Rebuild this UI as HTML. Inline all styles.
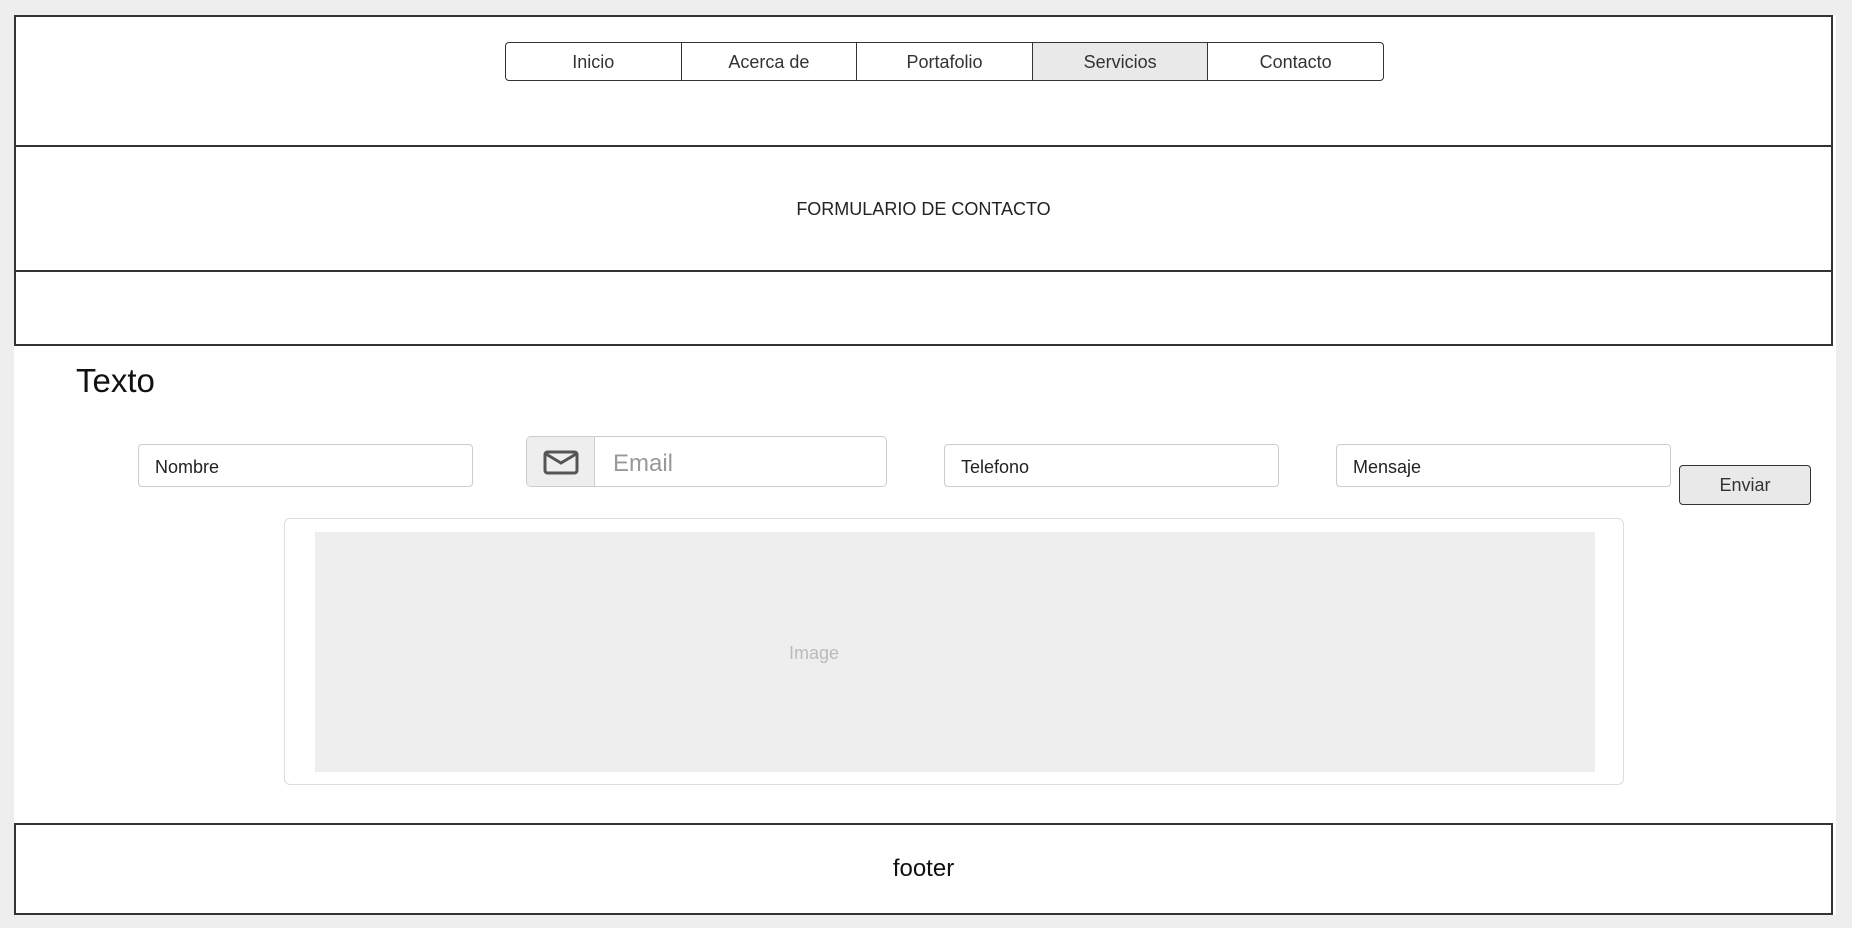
<!DOCTYPE html>
<html><head><meta charset="utf-8"><style>
*{box-sizing:border-box;margin:0;padding:0}
body{width:1852px;height:928px;background:#eee;position:relative;overflow:hidden;font-family:"Liberation Sans",Arial,sans-serif;color:#222}
.a{position:absolute}
.white{left:14px;top:15px;width:1822px;height:900px;background:#fff}
.box{border:2px solid #333;background:#fff}
.nav{left:505px;top:42px;width:879px;height:39px;border:1.5px solid #333;border-radius:4px;display:flex;overflow:hidden;background:#fff}
.nav div{flex:1;text-align:center;line-height:38px;font-size:18px;color:#333;border-left:1.5px solid #333}
.nav div:first-child{border-left:none}
.inp{border:1.5px solid #ccc;border-radius:4px;background:#fff;font-size:18px;color:#222;padding-left:16px;line-height:44px}
</style></head><body>
<div class="a white"></div>
<div class="a box" style="left:14px;top:15px;width:1819px;height:132px"></div>
<div class="a nav"><div>Inicio</div><div>Acerca de</div><div>Portafolio</div><div style="background:#e9e9e9">Servicios</div><div>Contacto</div></div>
<div class="a box" style="left:14px;top:145px;width:1819px;height:127px"></div>
<div class="a" style="left:14px;top:199px;width:1819px;text-align:center;font-size:18px;color:#222">FORMULARIO DE CONTACTO</div>
<div class="a box" style="left:14px;top:270px;width:1819px;height:76px"></div>
<div class="a" style="left:76px;top:362px;font-size:33px;color:#111">Texto</div>
<div class="a inp" style="left:138px;top:444px;width:335px;height:43px">Nombre</div>
<div class="a" style="left:526px;top:436px;width:361px;height:51px;border:1.5px solid #ccc;border-radius:5px;background:#fff;overflow:hidden">
 <div class="a" style="left:0;top:0;width:68px;height:100%;background:#eee;border-right:1.5px solid #ccc">
  <svg class="a" style="left:16px;top:13px" width="36" height="25" viewBox="0 0 36 25"><rect x="2" y="2" width="32" height="21" rx="2.5" fill="none" stroke="#555" stroke-width="3"/><path d="M3 4 L18 13 L33 4" fill="none" stroke="#555" stroke-width="3"/></svg>
 </div>
 <div class="a" style="left:86px;top:13px;font-size:24px;color:#999">Email</div>
</div>
<div class="a inp" style="left:944px;top:444px;width:335px;height:43px">Telefono</div>
<div class="a inp" style="left:1336px;top:444px;width:335px;height:43px">Mensaje</div>
<div class="a" style="left:1679px;top:465px;width:132px;height:40px;border:1.5px solid #333;border-radius:4px;background:#e9e9e9;text-align:center;line-height:39px;font-size:18px;color:#333">Enviar</div>
<div class="a" style="left:284px;top:518px;width:1340px;height:267px;border:1.5px solid #ddd;border-radius:6px;background:#fff"></div>
<div class="a" style="left:315px;top:532px;width:1280px;height:240px;background:#eee"></div>
<div class="a" style="left:714px;top:643px;width:200px;text-align:center;font-size:18px;color:#bbb">Image</div>
<div class="a box" style="left:14px;top:823px;width:1819px;height:92px"></div>
<div class="a" style="left:14px;top:855px;width:1819px;text-align:center;font-size:24px;color:#111">footer</div>
</body></html>
